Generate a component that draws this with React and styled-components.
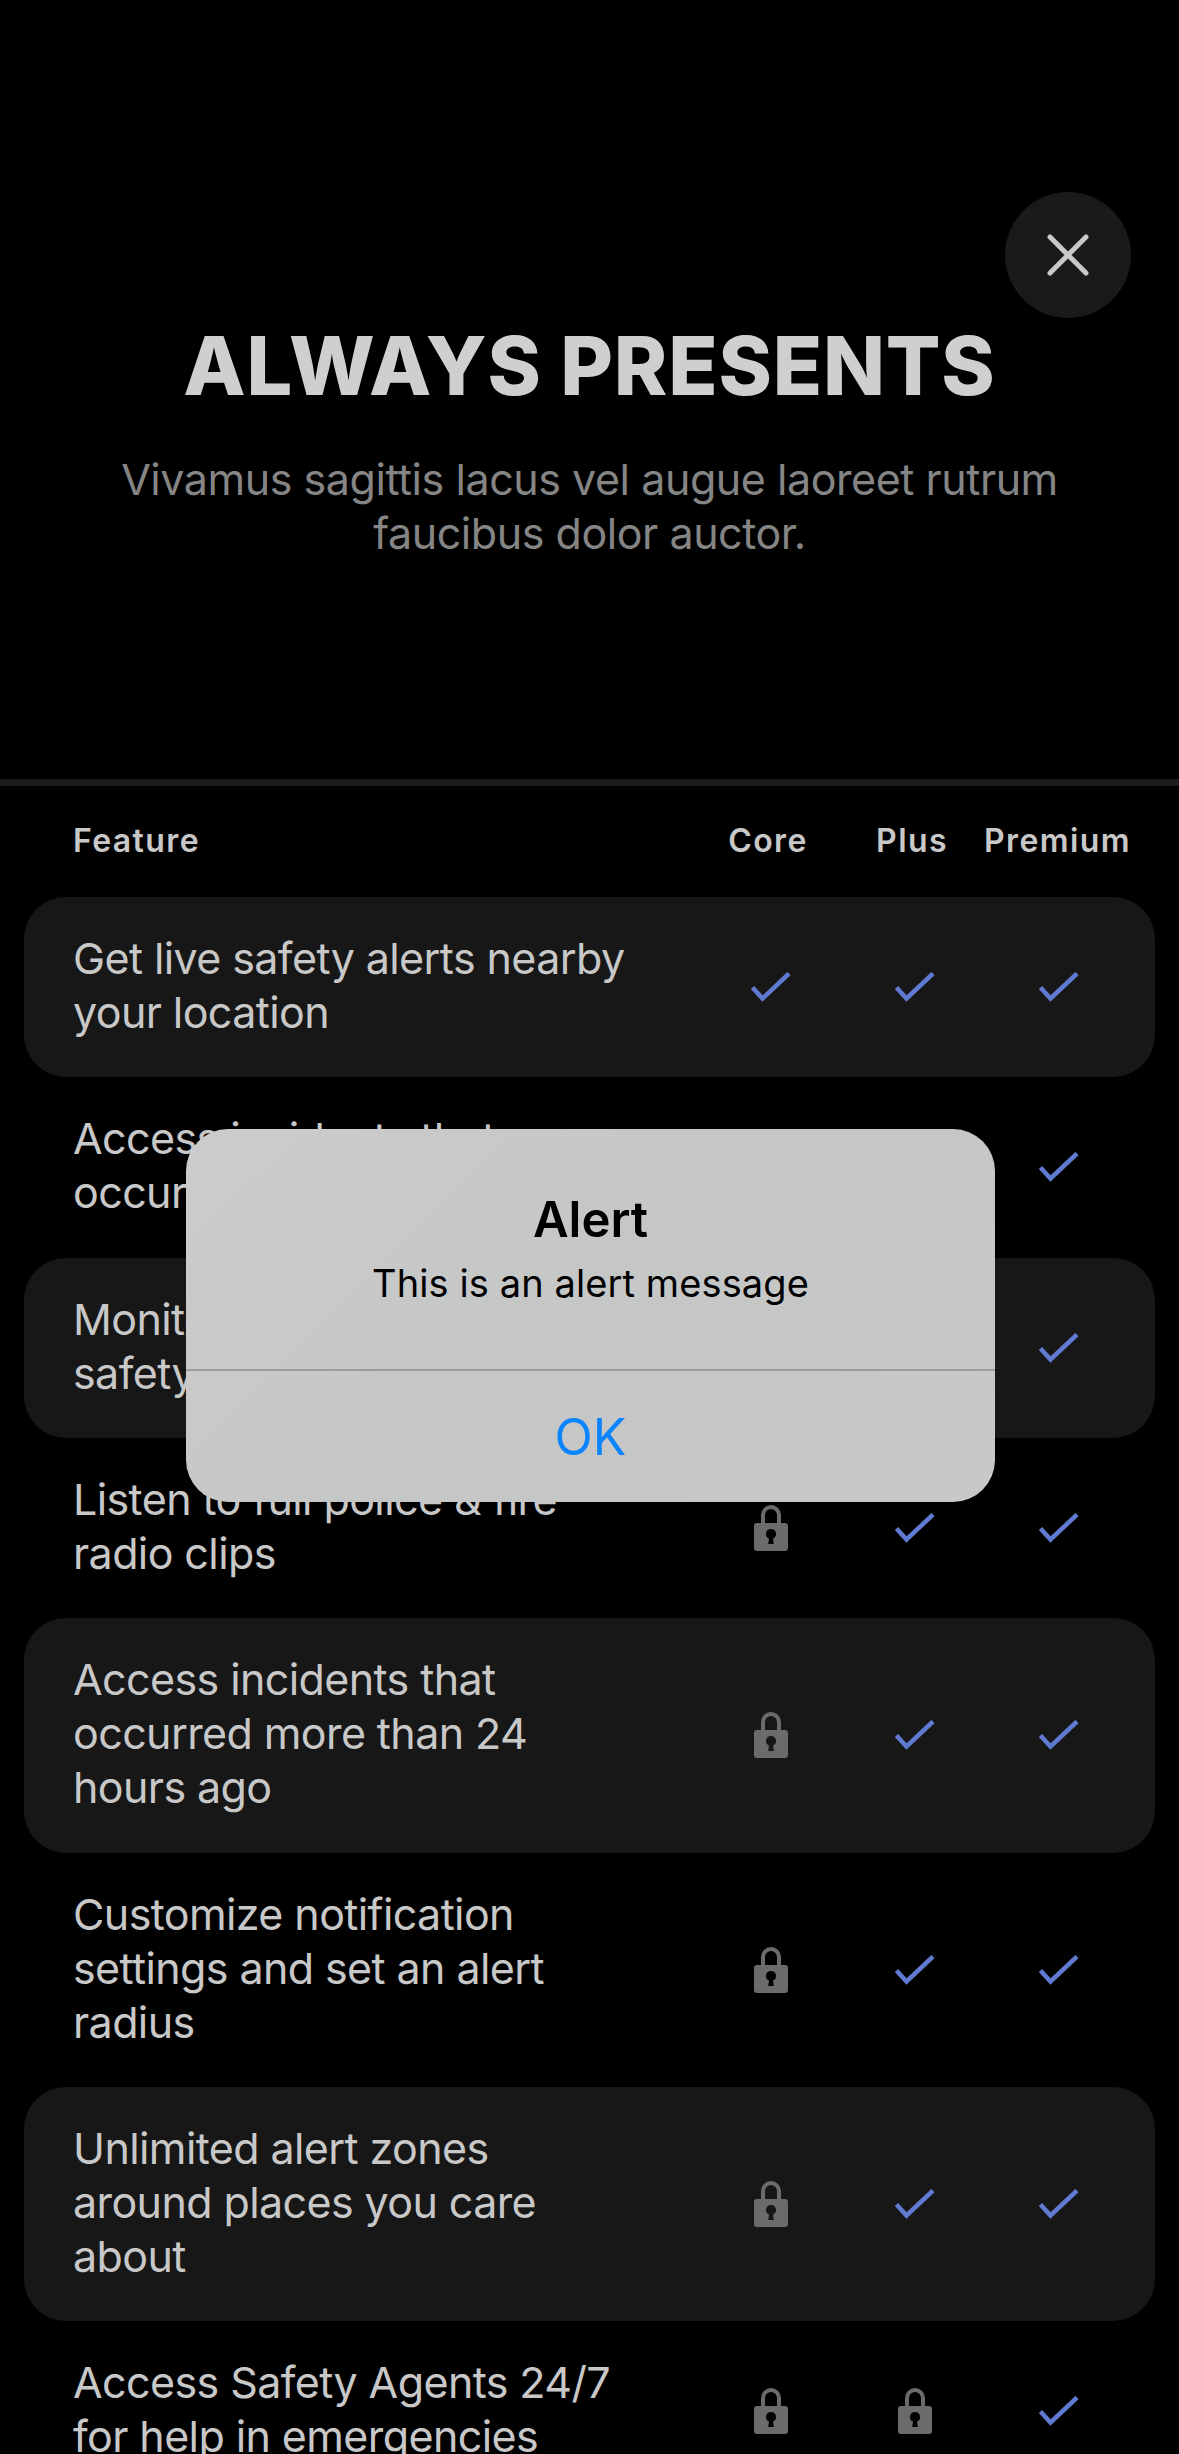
import styled, { createGlobalStyle } from 'styled-components';

const GlobalStyle = createGlobalStyle`
  html, body {
    margin: 0;
    background: #000;
  }
  * {
    box-sizing: border-box;
  }
`;

const Page = styled.div`
  position: relative;
  width: 1179px;
  height: 2454px;
  overflow: hidden;
  background: #000;
  font-family: Inter, 'Noto Sans', sans-serif;
`;

const Hero = styled.header`
  display: flex;
  flex-direction: column;
  align-items: center;
  height: 779px;
  padding-top: 192px;
`;

const CloseButton = styled.button`
  align-self: flex-end;
  display: flex;
  align-items: center;
  justify-content: center;
  width: 126px;
  height: 126px;
  margin-right: 48px;
  padding: 0;
  border: none;
  border-radius: 50%;
  background: #1a1a1a;
`;

const Title = styled.h1`
  margin: 7px 0 0;
  font-size: 81px;
  line-height: 82px;
  font-weight: 800;
  letter-spacing: 0.8px;
  color: #cfcfcf;
`;

const Subtitle = styled.p`
  width: 1000px;
  margin: 45px 0 0;
  font-size: 43px;
  line-height: 54px;
  font-weight: 400;
  letter-spacing: -0.45px;
  text-align: center;
  color: #858585;
`;

const Divider = styled.div`
  height: 7px;
  background: #1c1c1c;
`;

const Table = styled.section`
  padding: 0 24px;
`;

const HeaderRow = styled.div`
  display: grid;
  grid-template-columns: 1fr 144px 144px 144px;
  align-items: center;
  height: 111px;
  padding: 0 27px 3px 49px;
  font-size: 32px;
  font-weight: 600;
  letter-spacing: 1.4px;
  color: #c8c8c8;
`;

const ColumnName = styled.span`
  text-align: center;
  white-space: nowrap;
`;

const Row = styled.div`
  display: grid;
  grid-template-columns: 1fr 144px 144px 144px;
  align-items: center;
  padding: 36.17px 27px 36.17px 49px;
  border-radius: 42px;
  background: ${(props) => (props.$shaded ? '#171717' : 'transparent')};
`;

const FeatureText = styled.div`
  max-width: 556px;
  margin: -2px 0 2px;
  font-size: 43px;
  line-height: 54px;
  letter-spacing: -0.6px;
  color: #c8c8c8;
`;

const Cell = styled.div`
  display: flex;
  justify-content: center;
  padding-left: 6px;
`;

const Alert = styled.div`
  position: absolute;
  top: 1129px;
  left: 186px;
  display: flex;
  flex-direction: column;
  width: 809px;
  height: 373px;
  border-radius: 42px;
  background: linear-gradient(135deg, #cbcccb 0%, #c5c6c6 45%, #c8c8c8 100%);
  text-align: center;
`;

const AlertBody = styled.div`
  height: 242px;
  padding-top: 62px;
  border-bottom: 2px solid #9c9c9c;
`;

const AlertTitle = styled.div`
  font-size: 49px;
  line-height: 58px;
  font-weight: 600;
  color: #000;
`;

const AlertMessage = styled.div`
  margin-top: 9px;
  font-size: 38px;
  line-height: 50px;
  letter-spacing: 0.1px;
  color: #000;
`;

const AlertAction = styled.button`
  flex: 1;
  padding: 0;
  border: none;
  background: none;
  font-family: inherit;
  font-size: 50px;
  color: #0a84ff;
`;

const CloseIcon = () => (
  <svg width="42" height="42" viewBox="0 0 42 42" fill="none">
    <path d="M3 3L39 39M39 3L3 39" stroke="#c9c9c9" strokeWidth="5" strokeLinecap="round" />
  </svg>
);

const CheckIcon = () => (
  <svg width="40" height="30" viewBox="0 0 40 30" fill="none">
    <path d="M1.5 15.5L11.5 26.5L38 1.500" stroke="#5f7ad0" strokeWidth="4.5" />
  </svg>
);

const LockIcon = () => (
  <svg width="34" height="46" viewBox="0 0 34 46">
    <path d="M9 19V10a8 8 0 0 1 16 0v9" fill="none" stroke="#6b6b6b" strokeWidth="4" />
    <path
      fillRule="evenodd"
      fill="#6b6b6b"
      d="M3 18h28a3 3 0 0 1 3 3v22a3 3 0 0 1-3 3H3a3 3 0 0 1-3-3V21a3 3 0 0 1 3-3z M17 24a5 5 0 0 0-2 9.600l-.8 5.400h5.600l-.8-5.400A5 5 0 0 0 17 24z"
    />
  </svg>
);

const features = [
  { text: 'Get live safety alerts nearby your location', plan: [1, 1, 1] },
  { text: 'Access incidents that occurred in last 24 hours', plan: [1, 1, 1] },
  { text: "Monitor your loved ones' safety", plan: [1, 1, 1] },
  { text: 'Listen to full police & fire radio clips', plan: [0, 1, 1] },
  { text: 'Access incidents that occurred more than 24 hours ago', plan: [0, 1, 1] },
  { text: 'Customize notification settings and set an alert radius', plan: [0, 1, 1] },
  { text: 'Unlimited alert zones around places you care about', plan: [0, 1, 1] },
  { text: 'Access Safety Agents 24/7 for help in emergencies', plan: [0, 0, 1] },
];

const App = () => {
  return (
    <Page>
      <GlobalStyle />
      <Hero>
        <CloseButton aria-label="Close">
          <CloseIcon />
        </CloseButton>
        <Title>ALWAYS PRESENTS</Title>
        <Subtitle>Vivamus sagittis lacus vel augue laoreet rutrum faucibus dolor auctor.</Subtitle>
      </Hero>
      <Divider />
      <Table>
        <HeaderRow>
          <span>Feature</span>
          <ColumnName>Core</ColumnName>
          <ColumnName>Plus</ColumnName>
          <ColumnName>Premium</ColumnName>
        </HeaderRow>
        {features.map((feature, index) => (
          <Row key={feature.text} $shaded={index % 2 === 0}>
            <FeatureText>{feature.text}</FeatureText>
            {feature.plan.map((included, column) => (
              <Cell key={column}>{included ? <CheckIcon /> : <LockIcon />}</Cell>
            ))}
          </Row>
        ))}
      </Table>
      <Alert>
        <AlertBody>
          <AlertTitle>Alert</AlertTitle>
          <AlertMessage>This is an alert message</AlertMessage>
        </AlertBody>
        <AlertAction>OK</AlertAction>
      </Alert>
    </Page>
  );
};

export default App;
